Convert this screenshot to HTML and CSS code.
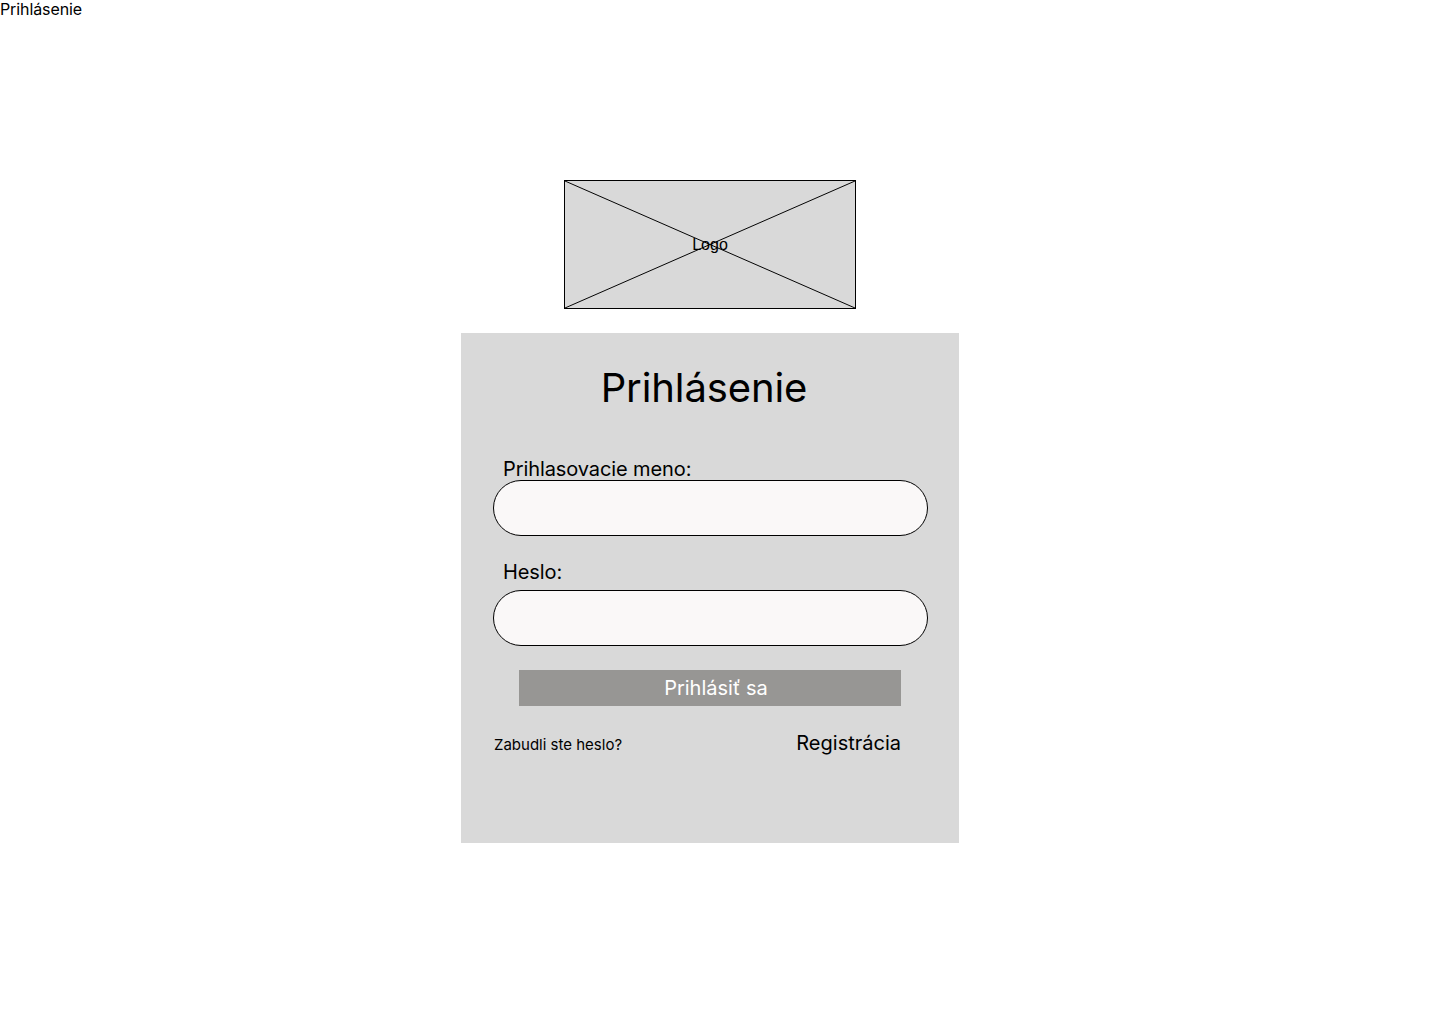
FILE: index.html
```html
<!DOCTYPE html>
<html lang="sk">
<head>
    <meta charset="UTF-8">
    <meta name="viewport" content="width=device-width, initial-scale=1.0">
    <title>Prihlásenie</title>
    <link rel="stylesheet" href="styles.css">
</head>
<body>
    <div class="page-title">Prihlásenie</div>

    <div class="wrap">
        <div class="logo">
            <svg class="logo-x" width="292" height="129" viewBox="0 0 292 129" preserveAspectRatio="none">
                <line x1="0" y1="0" x2="292" y2="129" stroke="#000" stroke-width="1"/>
                <line x1="292" y1="0" x2="0" y2="129" stroke="#000" stroke-width="1"/>
            </svg>
            <span class="logo-text">Logo</span>
        </div>

        <div class="card">
            <h1>Prihlásenie</h1>
            <label class="label label-first" for="username">Prihlasovacie meno:</label>
            <input class="field" id="username" type="text">
            <label class="label label-second" for="password">Heslo:</label>
            <input class="field" id="password" type="password">
            <button class="login-btn">Prihlásiť sa</button>
            <div class="links">
                <a href="#" class="forgot">Zabudli ste heslo?</a>
                <a href="#" class="register">Registrácia</a>
            </div>
        </div>
    </div>
</body>
</html>
```

FILE: styles.css
```css
body {
    margin: 0;
    font-family: 'Inter', 'Noto Sans', sans-serif;
    color: #000;
    background: #fff;
}
.page-title {
    font-size: 16px;
    line-height: 19px;
    letter-spacing: -0.1px;
}

.wrap {
    width: 498px;
    margin-left: 461px;
    padding-top: 161px;
}

.logo {
    position: relative;
    width: 292px;
    height: 129px;
    margin: 0 auto;
    background: #d9d9d9;
    border: 1px solid #000;
    box-sizing: border-box;
    display: flex;
    align-items: center;
    justify-content: center;
}
.logo-x {
    position: absolute;
    left: 0;
    top: 0;
    width: 100%;
    height: 100%;
}
.logo-text {
    position: relative;
    font-family: 'Liberation Sans', Arial, sans-serif;
    font-size: 16px;
}

.card {
    margin-top: 24px;
    height: 510px;
    box-sizing: border-box;
    background: #d9d9d9;
    padding: 31px 31px 0 32px;
    display: flex;
    flex-direction: column;
}
.card h1 {
    margin: 0 13px 0 0;
    font-size: 40px;
    font-weight: 400;
    line-height: 48px;
    letter-spacing: -0.1px;
    text-align: center;
}

.label {
    font-size: 20px;
    line-height: 24px;
    padding-left: 10px;
    letter-spacing: -0.1px;
}
.label-first {
    margin-top: 45px;
    margin-bottom: -1px;
}
.label-second {
    margin-top: 24px;
    margin-bottom: 6px;
}

.field {
    width: 435px;
    height: 56px;
    box-sizing: border-box;
    border: 1px solid #000;
    border-radius: 28px;
    background: #faf8f8;
    padding: 0 24px;
    font-family: inherit;
    font-size: 18px;
    outline: none;
}

.login-btn {
    margin: 24px 0 0 26px;
    width: 382px;
    height: 36px;
    border: none;
    background: #979694;
    color: #fff;
    font-family: inherit;
    font-size: 20px;
    padding: 0 0 0 12px;
    cursor: pointer;
}

.links {
    margin-top: 25px;
    width: 408px;
    display: flex;
    justify-content: space-between;
    align-items: baseline;
}
.links a {
    color: #000;
    text-decoration: none;
}
.forgot {
    font-size: 15px;
    padding-left: 1px;
}
.register {
    font-size: 20px;
    line-height: 24px;
}
```
